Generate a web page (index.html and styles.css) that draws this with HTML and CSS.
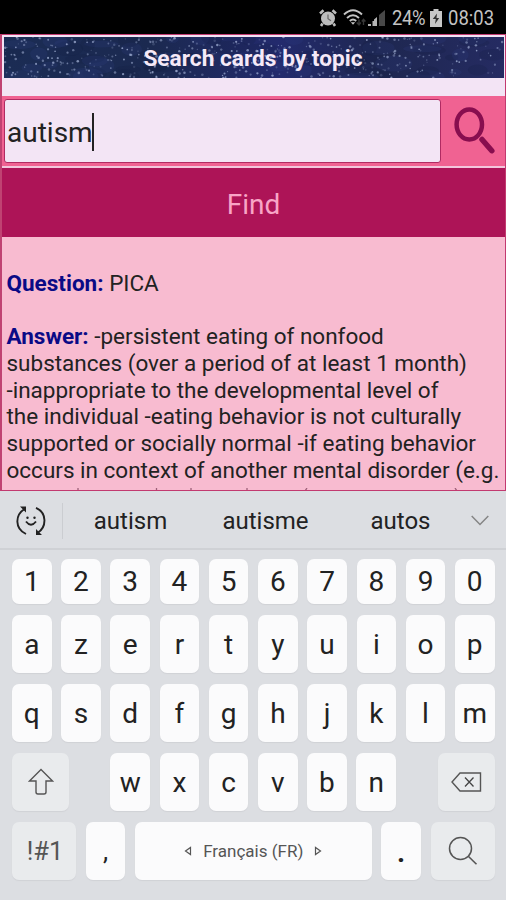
FILE: index.html
```html
<!DOCTYPE html>
<html lang="en">
<head>
<meta charset="utf-8">
<title>Search cards</title>
<link rel="stylesheet" href="styles.css">
</head>
<body>
<header class="status">
  <svg class="alarm" viewBox="0 0 18 18"><circle cx="9" cy="9.5" r="7" fill="#bdbdbd"/><path d="M1 4.5 4.5 1.3M17 4.5 13.5 1.3M3.5 14.5 2 17M14.5 14.5 16 17" stroke="#bdbdbd" stroke-width="2.6"/><path d="M9 5.5v4.3l3 2" stroke="#666" stroke-width="1.2" fill="none"/></svg>
  <svg class="wifi" viewBox="0 0 24 20"><path d="M1 6.5Q10-2 19 6.5M4 10Q10 4.5 16 10M6.8 13Q10 10.2 13.2 13" fill="none" stroke="#c4c4c4" stroke-width="1.9"/><path d="M7.8 14.2h4.4L10 16.8z" fill="#c4c4c4"/><path d="M16 11.5v5M13.8 14.5 16 17l1.8-2.5M20.5 17v-5M18.8 13.5l1.7-2.2 1.9 2.2" fill="none" stroke="#383838" stroke-width="1.4"/></svg>
  <svg class="signal" viewBox="0 0 18 18"><path d="M0 15h3v2H0zM4.500 12H8v5H4.500z" fill="#b5b5b5"/><path d="M6 10.500 9 8v9H6z" fill="#b5b5b5"/><path d="M11 6 17 1v16h-6z" fill="#484848"/></svg>
  <span class="percent">24%</span>
  <svg class="battery" viewBox="0 0 12 18"><path d="M3.500 0h5v2H12v16H0V2h3.500z" fill="#c8c8c8"/><path d="M7 4.500 2.800 10h3L5 15l4.200-6H6.500z" fill="#333"/></svg>
  <span class="clock">08:03</span>
</header>

<main class="app">
  <div class="banner">
    <svg class="sky" id="sky" viewBox="0 0 500 41" preserveAspectRatio="none" aria-hidden="true"></svg>
    <h1>Search cards by topic</h1>
  </div>
  <div class="search">
    <div class="field"><span>autism</span><i class="caret"></i></div>
    <svg class="magnifier" viewBox="0 0 64 69"><ellipse cx="28.300" cy="28.500" rx="12.700" ry="15" fill="none" stroke="#880e4f" stroke-width="4.500"/><path d="m41 43.500 9.800 11.200" stroke="#880e4f" stroke-width="5.500" stroke-linecap="round"/></svg>
  </div>
  <button class="find">Find</button>
  <section class="card">
    <p><b>Question:</b> PICA</p>
    <p><b>Answer:</b> -persistent eating of nonfood<br>substances (over a period of at least 1 month)<br>-inappropriate to the developmental level of<br>the individual -eating behavior is not culturally<br>supported or socially normal -if eating behavior<br>occurs in context of another mental disorder (e.g.</p>
    <svg class="clipped" viewBox="0 0 498 3"><path d="M71 0v2M149.500 0v2M184 0v2M240 0v2M298 3l2-3M448 0l2 3" stroke="#9c6078" stroke-width="1.300"/></svg>
  </section>
</main>

<section class="keyboard">
  <div class="suggest">
    <svg class="emoji" viewBox="0 0 32 32"><g fill="none" stroke="#222" stroke-width="1.900"><path d="M11 29C-.5 23.500 0 10 9.500 4M21 2.800C32 7.500 32 22 22.500 28"/><path d="M11 16.500Q16 23 21 16.500"/></g><path d="M5 1.500h6v6zM21 24v6h6z" fill="#222"/><circle cx="12.500" cy="12.800" r="1.200" fill="#222"/><circle cx="19.500" cy="12.800" r="1.200" fill="#222"/></svg>
    <i class="divider"></i>
    <span>autism</span><span>autisme</span><span>autos</span>
    <svg class="chevron" viewBox="0 0 18 11"><path d="m.7 1 8.300 8.500L17.300 1" fill="none" stroke="#858585" stroke-width="1.500"/></svg>
  </div>
  <div class="keys">
    <div class="row digits"><kbd>1</kbd><kbd>2</kbd><kbd>3</kbd><kbd>4</kbd><kbd>5</kbd><kbd>6</kbd><kbd>7</kbd><kbd>8</kbd><kbd>9</kbd><kbd>0</kbd></div>
    <div class="row"><kbd>a</kbd><kbd>z</kbd><kbd>e</kbd><kbd>r</kbd><kbd>t</kbd><kbd>y</kbd><kbd>u</kbd><kbd>i</kbd><kbd>o</kbd><kbd>p</kbd></div>
    <div class="row"><kbd>q</kbd><kbd>s</kbd><kbd>d</kbd><kbd>f</kbd><kbd>g</kbd><kbd>h</kbd><kbd>j</kbd><kbd>k</kbd><kbd>l</kbd><kbd>m</kbd></div>
    <div class="row letters">
      <kbd class="fn shift"><svg viewBox="0 0 26 28"><path d="M13 1.500 24.500 13H18v11q0 2-2 2h-6q-2 0-2-2V13H1.500z" fill="none" stroke="#555" stroke-width="1.400"/></svg></kbd>
      <kbd>w</kbd><kbd>x</kbd><kbd>c</kbd><kbd>v</kbd><kbd>b</kbd><kbd>n</kbd>
      <kbd class="fn back"><svg viewBox="0 0 31 20"><path d="M9 1h20.500v18H9L1 10z" fill="none" stroke="#555" stroke-width="1.400"/><path d="m14 5.500 8.500 9M22.500 5.500l-8.500 9" stroke="#444" stroke-width="1.300"/></svg></kbd>
    </div>
    <div class="row bottom">
      <kbd class="fn sym">!#1</kbd>
      <kbd class="punct">,</kbd>
      <kbd class="space"><svg viewBox="0 0 8 10"><path d="M6.500 1.500v7L1.500 5z" fill="none" stroke="#555" stroke-width="1.200"/></svg><span>Français (FR)</span><svg viewBox="0 0 8 10"><path d="M1.500 1.500v7l5-3.500z" fill="none" stroke="#555" stroke-width="1.200"/></svg></kbd>
      <kbd class="punct dot">.</kbd>
      <kbd class="fn go"><svg viewBox="0 0 30 30"><circle cx="12.500" cy="12.500" r="11" fill="none" stroke="#555" stroke-width="1.500"/><path d="m20.300 20.300 8.200 8" stroke="#555" stroke-width="1.600"/></svg></kbd>
    </div>
  </div>
</section>
<script src="sky.js"></script>
</body>
</html>
```
FILE: styles.css
```css
* { box-sizing: border-box; }
body {
  margin: 0;
  width: 506px;
  height: 900px;
  overflow: hidden;
  background: #dcdee2;
  font-family: Roboto, "Liberation Sans", sans-serif;
  color: #222;
}
svg { display: block; flex: none; }

.status {
  height: 34px;
  padding: 2px 12px 0 0;
  background: #000;
  color: #c4c4c4;
  display: flex;
  align-items: center;
  justify-content: flex-end;
  font-size: 21px;
}
.alarm { width: 18px; height: 18px; margin-right: 6px; }
.wifi { width: 24px; height: 20px; margin-right: 1px; }
.signal { width: 18px; height: 18px; margin-right: 6px; }
.percent, .clock { transform: scaleX(0.88); transform-origin: left; white-space: nowrap; }
.percent { width: 33px; letter-spacing: -0.5px; margin-right: 5px; }
.battery { width: 12px; height: 18px; margin-right: 6px; }
.clock { width: 46px; letter-spacing: 0; }

.app {
  height: 457px;
  border: 1px solid #c23a70;
  border-left: 2px solid #c04272;
  background: #f3e4f5;
  display: flex;
  flex-direction: column;
}
.banner {
  flex: none;
  height: 41px;
  margin: 2px 1px 18px 2px;
  background: linear-gradient(90deg, #1b2c54, #1b2950 30%, #232a6d 55%, #1e2750 75%, #252b62);
  display: grid;
}
.sky, .banner h1 { grid-area: 1 / 1; }
.sky { width: 100%; height: 41px; }
.banner h1 {
  margin: 2px 0 0;
  align-self: center;
  text-align: center;
  font-size: 22.700px;
  line-height: 26px;
  font-weight: 700;
  color: #f5e9f7;
  z-index: 1;
  position: relative;
  left: -1px;
}
.search {
  flex: none;
  height: 70px;
  background: #f06292;
  display: flex;
  align-items: flex-start;
}
.field {
  width: 437px;
  height: 64px;
  margin: 3px 0 0 2px;
  border: 1px solid #b02a62;
  border-width: 1px 1px 1.500px;
  border-radius: 3px;
  background: #f3e5f5;
  display: flex;
  align-items: center;
  padding: 2px 0 0 2px;
  font-size: 28px;
}
.caret { width: 2px; height: 38px; margin-left: -1px; background: #222; }
.magnifier { width: 64px; height: 69px; }
.find {
  flex: none;
  height: 71px;
  border: 0;
  border-top: 2px solid #f3c6dc;
  padding: 3px 0 0;
  background: #ad1457;
  color: #f8a5c6;
  font: 28px Roboto, sans-serif;
}
.card {
  flex: 1;
  min-height: 0;
  overflow: hidden;
  background: #f8bbd0;
  padding: 33px 0 0 4.500px;
  font-size: 22.500px;
  line-height: 26.700px;
  white-space: nowrap;
  display: flex;
  flex-direction: column;
}
.card p { margin: 0 0 26.500px; }
.card p + p { margin-bottom: 5px; }
.card b { color: #0a0a86; }
.clipped { width: 498px; height: 3px; }

.keyboard { height: 409px; }
.suggest {
  height: 59px;
  border-bottom: 2px solid #cfd1d5;
  display: flex;
  align-items: center;
  padding: 2px 16px 0 15px;
  font-size: 24px;
}
.emoji { width: 32px; height: 32px; }
.divider { width: 1px; height: 36px; margin-left: 15px; background: #cbcdd1; }
.suggest span { width: 135px; text-align: center; }
.chevron { width: 18px; height: 11px; margin-left: 3px; }
.keys {
  padding: 9px 11.500px 0 12px;
  display: grid;
  grid-template-rows: 45px repeat(4, 58px);
  gap: 11px;
}
.row { display: flex; gap: 9.700px; }
kbd {
  flex: 1;
  border-radius: 7px;
  background: #fbfbfc;
  box-shadow: 0 1px 1px #d0d2d6;
  display: flex;
  align-items: center;
  justify-content: center;
  font: 28px Roboto, sans-serif;
}
.fn { background: #e9ebed; }
.letters kbd { flex: none; width: 39.500px; }
.letters .fn { width: 57px; }
.letters .shift { margin-right: 31.800px; }
.letters .back { margin-left: auto; }
.shift svg { width: 26px; height: 28px; }
.back svg { width: 31px; height: 20px; }
.bottom kbd { flex: none; width: 39.500px; }
.bottom .fn { width: 64px; }
.bottom .sym { font-size: 25.500px; color: #555; padding-left: 2px; }
.bottom .space { flex: 1; gap: 11px; font-size: 17px; color: #555; }
.bottom .punct { font-size: 26px; }
.bottom .dot { font-size: 28px; font-weight: 700; padding-top: 3px; }
.space svg { width: 8px; height: 10px; }
.go svg { width: 30px; height: 30px; }
```
FILE: sky.js
```js
// Fill the banner with a repeatable star field.
(function () {
  var sky = document.getElementById("sky");
  var seed = 41;
  function rnd() {
    seed = (seed * 16807) % 2147483647;
    return seed / 2147483647;
  }
  function add(cx, cy, rx, ry, fill, opacity) {
    var e = document.createElementNS("http://www.w3.org/2000/svg", "ellipse");
    e.setAttribute("cx", cx);
    e.setAttribute("cy", cy);
    e.setAttribute("rx", rx);
    e.setAttribute("ry", ry);
    e.setAttribute("fill", fill);
    e.setAttribute("opacity", opacity);
    sky.appendChild(e);
  }
  var i;
  for (i = 0; i < 60; i++) {
    add(rnd() * 500, rnd() * 41, 6 + rnd() * 14, 3 + rnd() * 5, i % 2 ? "#33418a" : "#101c3c", 0.18);
  }
  for (i = 0; i < 480; i++) {
    var r = 0.6 + rnd() * 0.7;
    add(rnd() * 500, rnd() * 41, r, r, "#b4c2e6", 0.15 + rnd() * 0.55);
  }
})();
```
